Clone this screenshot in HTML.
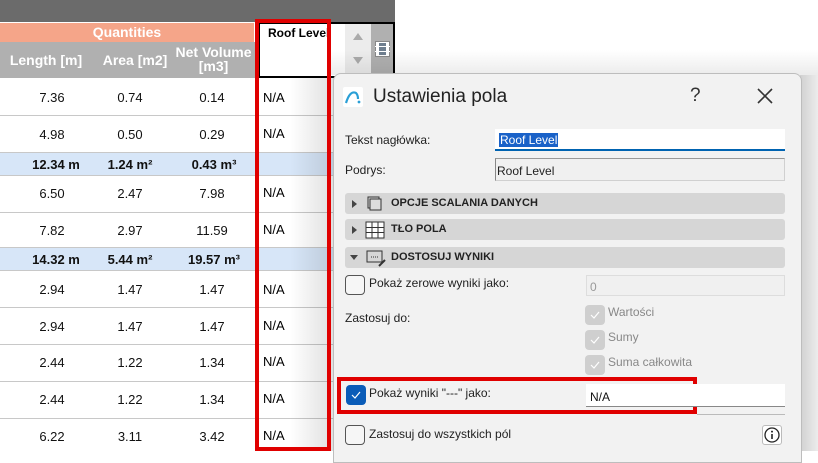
<!DOCTYPE html>
<html><head><meta charset="utf-8"><style>
*{box-sizing:border-box;margin:0;padding:0}
body{width:818px;height:451px;overflow:hidden;background:#fff;position:relative;font-family:"Liberation Sans",Arial,sans-serif}
.a{position:absolute}
.n{position:absolute;font-size:13px;color:#111;text-align:center;width:80px}
.hl{position:absolute;left:0;width:340px;height:1px;background:#c8c8c8}
.sum{position:absolute;left:0;width:340px;background:#d7e6f8}
.d{font-family:"Liberation Sans",sans-serif;font-size:12px;color:#222}
.sec{position:absolute;left:345px;width:440px;height:21px;background:#d6d6d6;border-radius:3px;font-size:11px;font-weight:bold;color:#222}
.cb{position:absolute;width:20px;height:20px;border:1px solid #555;border-radius:4px;background:#f6f6f6}
.dcb{position:absolute;width:20px;height:20px;border-radius:4px;background:#cfcfcf}
.hd{position:absolute;color:#fff;font-weight:bold;font-size:14px;text-align:center}
</style></head><body>
<div class="a" style="left:0;top:0;width:395px;height:22px;background:#6b6b6b"></div>
<div class="a" style="left:0;top:23px;width:254px;height:19px;background:#f5a589;color:#fff;font-weight:bold;font-size:14px;text-align:center;line-height:19px">Quantities</div>
<div class="a" style="left:0;top:42px;width:258px;height:36px;background:#b0b0b0"></div>
<div class="hd" style="left:0px;top:52px;width:92px">Length [m]</div>
<div class="hd" style="left:95px;top:52px;width:80px">Area [m2]</div>
<div class="hd" style="left:175px;top:45px;width:77px;line-height:14px">Net Volume<br>[m3]</div>
<div class="a" style="left:258px;top:22px;width:137px;height:56px;border:2px solid #000;background:#fff"></div>
<div class="a" style="left:345px;top:24px;width:26px;height:52px;background:#ececec"></div>
<div class="a" style="left:353px;top:33px;width:0;height:0;border-left:5px solid transparent;border-right:5px solid transparent;border-bottom:7px solid #aaa"></div>
<div class="a" style="left:353px;top:57px;width:0;height:0;border-left:5px solid transparent;border-right:5px solid transparent;border-top:7px solid #aaa"></div>
<div class="a" style="left:371px;top:24px;width:22px;height:52px;background:#b0b0b0"></div>
<svg class="a" style="left:375px;top:41px" width="15" height="16"><rect x="0.5" y="0.5" width="14" height="15" fill="#fff" stroke="#888"/><rect x="4" y="2" width="7" height="12" fill="#6f7f8f"/><path d="M0 5.5H15M0 10.5H15" stroke="#fff"/></svg>
<div class="a" style="left:268px;top:26px;font-size:12px;font-weight:bold;color:#000">Roof Level</div>
<!-- rows -->
<div class="hl" style="top:115px"></div>
<div class="sum" style="top:153px;height:22px"></div>
<div class="hl" style="top:175px"></div>
<div class="hl" style="top:212px"></div>
<div class="sum" style="top:248px;height:22px"></div>
<div class="hl" style="top:270px"></div>
<div class="hl" style="top:307px"></div>
<div class="hl" style="top:344px"></div>
<div class="hl" style="top:381px"></div>
<div class="hl" style="top:418px"></div>
<div class="hl" style="top:152px"></div>
<div class="hl" style="top:247px"></div>
<div class="n" style="left:12px;top:90px">7.36</div><div class="n" style="left:90px;top:90px">0.74</div><div class="n" style="left:172px;top:90px">0.14</div><div class="a" style="left:263px;top:90px;font-size:13px">N/A</div>
<div class="n" style="left:12px;top:127px">4.98</div><div class="n" style="left:90px;top:127px">0.50</div><div class="n" style="left:172px;top:127px">0.29</div><div class="a" style="left:263px;top:126px;font-size:13px">N/A</div>
<div class="n" style="left:16px;top:157px;font-weight:bold">12.34 m</div><div class="n" style="left:90px;top:157px;font-weight:bold">1.24 m²</div><div class="n" style="left:174px;top:157px;font-weight:bold">0.43 m³</div>
<div class="n" style="left:12px;top:186px">6.50</div><div class="n" style="left:90px;top:186px">2.47</div><div class="n" style="left:172px;top:186px">7.98</div><div class="a" style="left:263px;top:185px;font-size:13px">N/A</div>
<div class="n" style="left:12px;top:223px">7.82</div><div class="n" style="left:90px;top:223px">2.97</div><div class="n" style="left:172px;top:223px">11.59</div><div class="a" style="left:263px;top:222px;font-size:13px">N/A</div>
<div class="n" style="left:16px;top:252px;font-weight:bold">14.32 m</div><div class="n" style="left:90px;top:252px;font-weight:bold">5.44 m²</div><div class="n" style="left:174px;top:252px;font-weight:bold">19.57 m³</div>
<div class="n" style="left:12px;top:282px">2.94</div><div class="n" style="left:90px;top:282px">1.47</div><div class="n" style="left:172px;top:282px">1.47</div><div class="a" style="left:263px;top:282px;font-size:13px">N/A</div>
<div class="n" style="left:12px;top:319px">2.94</div><div class="n" style="left:90px;top:319px">1.47</div><div class="n" style="left:172px;top:319px">1.47</div><div class="a" style="left:263px;top:318px;font-size:13px">N/A</div>
<div class="n" style="left:12px;top:355px">2.44</div><div class="n" style="left:90px;top:355px">1.22</div><div class="n" style="left:172px;top:355px">1.34</div><div class="a" style="left:263px;top:354px;font-size:13px">N/A</div>
<div class="n" style="left:12px;top:392px">2.44</div><div class="n" style="left:90px;top:392px">1.22</div><div class="n" style="left:172px;top:392px">1.34</div><div class="a" style="left:263px;top:391px;font-size:13px">N/A</div>
<div class="n" style="left:12px;top:429px">6.22</div><div class="n" style="left:90px;top:429px">3.11</div><div class="n" style="left:172px;top:429px">3.42</div><div class="a" style="left:263px;top:428px;font-size:13px">N/A</div>
<!-- shadow -->
<div class="a" style="left:290px;top:78px;width:45px;height:373px;background:linear-gradient(90deg,rgba(0,0,0,0),rgba(0,0,0,0.13))"></div>
<div class="a" style="left:330px;top:50px;width:488px;height:25px;background:linear-gradient(180deg,rgba(0,0,0,0),rgba(0,0,0,0.08))"></div>
<div class="a" style="left:800px;top:75px;width:18px;height:376px;background:linear-gradient(90deg,#d0d0d0,#ececec)"></div>
<!-- red column box -->
<div class="a" style="left:255px;top:19px;width:76px;height:432px;border:4px solid #e00000;border-bottom:none"></div>
<div class="a" style="left:255px;top:447px;width:76px;height:4px;background:#e00000"></div>
<!-- dialog -->
<div class="a d" style="left:333px;top:73px;width:469px;height:390px;background:#f2f2f2;border:1px solid #bdbdbd;border-radius:8px 8px 0 0"></div>
<div class="a" style="left:343px;top:87px;width:20px;height:20px;background:#fff;border-radius:2px">
<svg width="20" height="20"><path d="M3 16 Q7 3 13 6 Q15 8 15 12" stroke="#2a9fd6" stroke-width="2.2" fill="none"/><circle cx="16" cy="15" r="1.4" fill="#2a9fd6"/></svg></div>
<div class="a" style="left:373px;top:86px;font-size:19px;color:#222">Ustawienia pola</div>
<div class="a" style="left:690px;top:85px;font-size:19px;color:#333">?</div>
<svg class="a" style="left:757px;top:88px" width="16" height="16"><path d="M1 1L15 15M15 1L1 15" stroke="#333" stroke-width="1.6"/></svg>
<div class="a d" style="left:345px;top:133px">Tekst nagłówka:</div>
<div class="a" style="left:495px;top:129px;width:290px;height:22px;background:#fff;border-bottom:2px solid #0063b1"></div>
<div class="a d" style="left:499px;top:133px;background:#1a62c8;color:#fff;padding:0 1px">Roof Level</div>
<div class="a d" style="left:345px;top:163px">Podrys:</div>
<div class="a" style="left:495px;top:158px;width:290px;height:23px;background:#f0f0f0;border:1px solid #d0d0d0;border-left-color:#888;border-top-color:#999"></div>
<div class="a d" style="left:497px;top:164px">Roof Level</div>
<div class="sec" style="top:193px"></div><div class="sec" style="top:219px"></div><div class="sec" style="top:247px"></div>
<div class="a" style="left:352px;top:200px;border-left:5px solid #444;border-top:4px solid transparent;border-bottom:4px solid transparent"></div>
<div class="a" style="left:352px;top:226px;border-left:5px solid #444;border-top:4px solid transparent;border-bottom:4px solid transparent"></div>
<div class="a" style="left:350px;top:255px;border-top:5px solid #444;border-left:4px solid transparent;border-right:4px solid transparent"></div>
<svg class="a" style="left:367px;top:196px" width="16" height="16"><rect x="1" y="1" width="11" height="11" fill="none" stroke="#333"/><rect x="3" y="3" width="11" height="11" fill="#ddd" stroke="#333"/></svg>
<svg class="a" style="left:365px;top:221px" width="20" height="18"><rect x="1" y="1" width="18" height="16" fill="#fff" stroke="#333"/><path d="M7 1V17M13 1V17M1 6.5H19M1 11.5H19" stroke="#333"/></svg>
<svg class="a" style="left:366px;top:249px" width="20" height="18"><rect x="1" y="2" width="15" height="11" fill="none" stroke="#333"/><path d="M5 8H12" stroke="#333" stroke-dasharray="1 1"/><path d="M13 17L19 11" stroke="#333" stroke-width="2"/></svg>
<div class="a" style="left:391px;top:197px;font-size:11px;font-weight:bold;color:#222">OPCJE SCALANIA DANYCH</div>
<div class="a" style="left:391px;top:223px;font-size:11px;font-weight:bold;color:#222">TŁO POLA</div>
<div class="a" style="left:391px;top:251px;font-size:11px;font-weight:bold;color:#222">DOSTOSUJ WYNIKI</div>
<div class="cb" style="left:345px;top:275px"></div>
<div class="a d" style="left:369px;top:276px">Pokaż zerowe wyniki jako:</div>
<div class="a" style="left:586px;top:275px;width:199px;height:21px;background:#f0f0f0;border:1px solid #ddd"></div>
<div class="a d" style="left:590px;top:280px;color:#999">0</div>
<div class="a d" style="left:345px;top:311px">Zastosuj do:</div>
<div class="dcb" style="left:585px;top:305px"></div><div class="a d" style="left:608px;top:305px;color:#888">Wartości</div>
<div class="dcb" style="left:585px;top:330px"></div><div class="a d" style="left:608px;top:330px;color:#888">Sumy</div>
<div class="dcb" style="left:585px;top:355px"></div><div class="a d" style="left:608px;top:355px;color:#888">Suma całkowita</div>
<svg class="a" style="left:585px;top:305px" width="20" height="70"><path d="M6 10L9 13L14 7M6 35L9 38L14 32M6 60L9 63L14 57" stroke="#fff" stroke-width="1.2" fill="none"/></svg>
<div class="a" style="left:337px;top:377px;width:360px;height:37px;border:4px solid #e00000"></div>
<div class="a" style="left:346px;top:385px;width:20px;height:20px;border-radius:4px;background:#0a5cb8"></div>
<svg class="a" style="left:346px;top:385px" width="20" height="20"><path d="M6 10L9 13L14 7" stroke="#fff" stroke-width="1.2" fill="none"/></svg>
<div class="a d" style="left:369px;top:386px">Pokaż wyniki "---" jako:</div>
<div class="a" style="left:586px;top:384px;width:199px;height:23px;background:#fff;border-bottom:1px solid #888"></div>
<div class="a d" style="left:590px;top:390px;color:#111">N/A</div>
<div class="a" style="left:697px;top:414px;width:88px;height:1px;background:#bbb"></div>
<div class="cb" style="left:345px;top:425px"></div>
<div class="a d" style="left:369px;top:427px">Zastosuj do wszystkich pól</div>
<div class="a" style="left:762px;top:425px;width:20px;height:20px;background:#fff;border:1px solid #bbb;border-radius:3px"></div>
<svg class="a" style="left:764px;top:427px" width="16" height="16"><circle cx="8" cy="8" r="7" fill="none" stroke="#222" stroke-width="1.3"/><rect x="7.2" y="7" width="1.6" height="5" fill="#222"/><circle cx="8" cy="4.6" r="1" fill="#222"/></svg>
</body></html>
